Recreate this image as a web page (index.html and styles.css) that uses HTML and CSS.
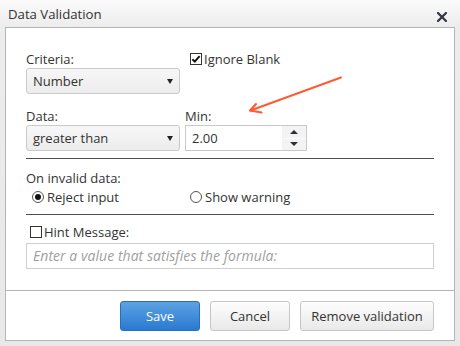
FILE: index.html
```html
<!DOCTYPE html>
<html>
<head>
<meta charset="utf-8">
<link rel="stylesheet" href="styles.css">
</head>
<body>
<div class="dialog">
  <div class="titlebar">
    <span class="title">Data Validation</span>
    <svg class="close" width="10" height="10" viewBox="0 0 10 10"><path d="M1 1 L9 9 M9 1 L1 9" stroke="#2f3640" stroke-width="2.2" stroke-linecap="square"/></svg>
  </div>
  <div class="panel">
    <div class="content">
      <div class="row row-criteria">
        <div class="field">
          <div class="label">Criteria:</div>
          <div class="select"><span>Number</span><span class="caret"></span></div>
        </div>
        <div class="check-col">
          <label class="check">
            <svg class="box" width="12" height="12" viewBox="0 0 12 12"><rect x="0.5" y="0.5" width="11" height="11" fill="#fff" stroke="#333"/><path d="M2.4 6.2 L4.8 8.6 L9.6 3.2" fill="none" stroke="#111" stroke-width="2"/></svg>
            <span>Ignore Blank</span>
          </label>
        </div>
      </div>
      <div class="row row-data">
        <div class="field">
          <div class="label">Data:</div>
          <div class="select"><span>greater than</span><span class="caret"></span></div>
        </div>
        <div class="field">
          <div class="label">Min:</div>
          <div class="number">
            <span class="value">2.00</span>
            <span class="spin">
              <span class="spin-btn"><span class="tri-up"></span></span>
              <span class="spin-btn"><span class="tri-down"></span></span>
            </span>
          </div>
        </div>
      </div>
      <div class="rule rule-1"></div>
      <div class="label invalid">On invalid data:</div>
      <div class="row radios">
        <label class="radio first"><span class="dot on"></span><span>Reject input</span></label>
        <label class="radio"><span class="dot"></span><span>Show warning</span></label>
      </div>
      <div class="rule rule-2"></div>
      <label class="check hint-check">
        <svg class="box" width="12" height="12" viewBox="0 0 12 12"><rect x="0.5" y="0.5" width="11" height="11" fill="#fff" stroke="#333"/></svg>
        <span>Hint Message:</span>
      </label>
      <div class="hint-input">Enter a value that satisfies the formula:</div>
    </div>
    <div class="footer">
      <button class="btn primary">Save</button>
      <button class="btn">Cancel</button>
      <button class="btn wide">Remove validation</button>
    </div>
  </div>
  <svg class="annot" width="460" height="346" viewBox="0 0 460 346">
    <path d="M341 77.5 L250.5 110.5" stroke="#ff5a33" stroke-width="2" fill="none" stroke-linecap="round"/>
    <path d="M256 104 L250 110.5 L261.5 112.5" stroke="#ff5a33" stroke-width="2" fill="none" stroke-linecap="round" stroke-linejoin="round"/>
  </svg>
</div>
</body>
</html>
```
FILE: styles.css
```css
html, body {
  margin: 0;
  padding: 0;
}
body {
  font-family: "Open Sans", "Noto Sans", sans-serif;
  font-size: 13px;
  color: #333;
  background: #e9e9e9;
}
.dialog {
  position: relative;
  width: 460px;
  height: 346px;
  display: flex;
  flex-direction: column;
  background: linear-gradient(#fbfbfb 0, #ececec 27px, #e8e8e8 100%);
}
.titlebar {
  height: 27px;
  flex: none;
  display: flex;
  align-items: center;
  justify-content: space-between;
  padding: 0 13px 0 8px;
  box-sizing: border-box;
}
.title {
  font-size: 13.2px;
  line-height: 27px;
  color: #333;
  padding-top: 1px;
}
.close {
  margin-top: 6px;
}
.panel {
  flex: 1;
  margin: 0 5px 5px;
  border: 1px solid #b5b5b5;
  background: #fff;
  display: flex;
  flex-direction: column;
}
.content {
  flex: 1;
  padding: 23px 20px 0;
}
.row {
  display: grid;
  grid-template-columns: 154px 1fr;
  column-gap: 5px;
}
.row-data {
  margin-top: 14px;
}
.label {
  line-height: 16px;
  margin-bottom: 1px;
}
.select {
  height: 26px;
  box-sizing: border-box;
  border: 1px solid #cacaca;
  border-radius: 3px;
  background: linear-gradient(#f7f7f7, #ececec);
  display: flex;
  align-items: center;
  justify-content: space-between;
  padding: 0 6px 0 6px;
  color: #333;
}
.caret {
  width: 0;
  height: 0;
  border-left: 3.5px solid transparent;
  border-right: 3.5px solid transparent;
  border-top: 5px solid #222;
  margin-top: 1px;
}
.check-col {
  padding-left: 5px;
}
.check {
  display: flex;
  align-items: center;
  gap: 2px;
  line-height: 16px;
}
.check .box {
  flex: none;
}
.number {
  width: 122px;
  height: 26px;
  box-sizing: border-box;
  border: 1px solid #c9c9c9;
  display: flex;
  align-items: stretch;
}
.value {
  flex: 1;
  padding-left: 6px;
  line-height: 24px;
}
.spin {
  width: 24px;
  display: flex;
  flex-direction: column;
  background: #f3f3f3;
}
.spin-btn {
  flex: 1;
  display: flex;
  align-items: center;
  justify-content: center;
}
.spin-btn + .spin-btn {
  border-top: 1px solid #fbfbfb;
}
.tri-up, .tri-down {
  width: 0;
  height: 0;
  border-left: 4px solid transparent;
  border-right: 4px solid transparent;
}
.tri-up {
  border-bottom: 4px solid #2b2f36;
}
.tri-down {
  border-top: 4px solid #2b2f36;
}
.rule {
  height: 1px;
  background: #4d4d4d;
}
.rule-1 {
  margin-top: 7px;
}
.invalid {
  margin-top: 11px;
  margin-bottom: 0;
}
.radios {
  margin-top: 3px;
}
.radio {
  display: flex;
  align-items: center;
  gap: 3px;
  line-height: 16px;
  padding-left: 5px;
}
.radio.first {
  padding-left: 6px;
}
.dot {
  width: 12px;
  height: 12px;
  box-sizing: border-box;
  border: 1px solid #555;
  border-radius: 50%;
  background: #fff;
  position: relative;
  flex: none;
}
.dot.on::after {
  content: "";
  position: absolute;
  left: 2px;
  top: 2px;
  width: 6px;
  height: 6px;
  border-radius: 50%;
  background: #111;
}
.rule-2 {
  margin-top: 9px;
}
.hint-check {
  margin-top: 9px;
  padding-left: 4px;
}
.hint-input {
  margin-top: 3px;
  height: 26px;
  box-sizing: border-box;
  border: 1px solid #cfcfcf;
  padding-left: 6px;
  line-height: 24px;
  font-style: italic;
  font-size: 14px;
  letter-spacing: 0.05px;
  color: #a0a0a0;
}
.footer {
  height: 50px;
  flex: none;
  border-top: 1px solid #b5b5b5;
  display: flex;
  justify-content: flex-end;
  align-items: flex-start;
  gap: 10px;
  padding: 10px 20px 0 0;
  box-sizing: border-box;
}
.btn {
  font-family: inherit;
  font-size: 13px;
  height: 30px;
  width: 80px;
  border: 1px solid #c6c6c6;
  border-radius: 3px;
  background: linear-gradient(#fdfdfd, #e9e9e9);
  color: #333;
  padding: 0;
  margin: 0;
}
.btn.primary {
  background: linear-gradient(#5da2e2, #2a7ad2);
  border-color: #2b6db7;
  color: #fff;
}
.btn.wide {
  width: 134px;
}
.annot {
  position: absolute;
  left: 0;
  top: 0;
  pointer-events: none;
}
```
